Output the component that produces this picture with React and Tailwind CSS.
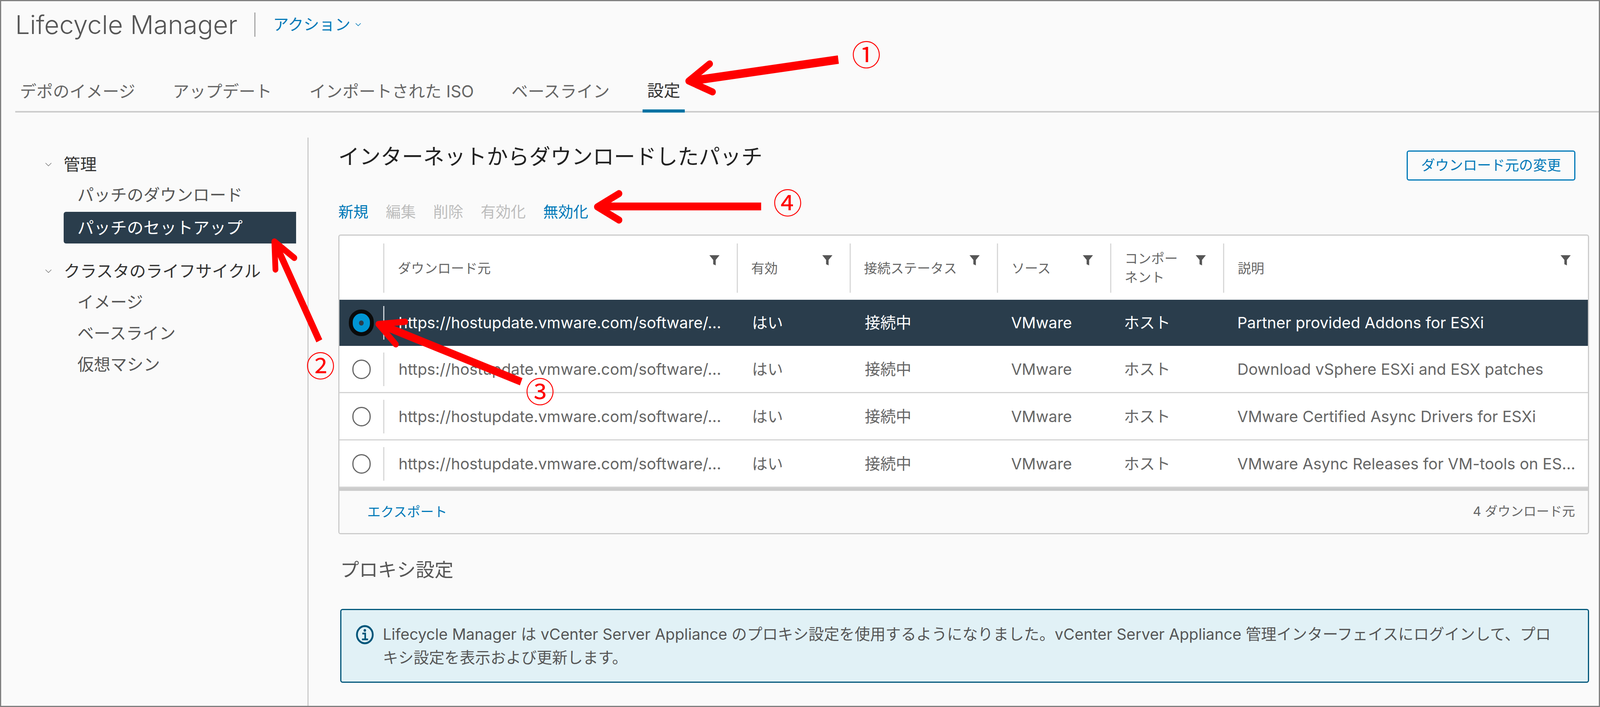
import { ChevronDown } from "lucide-react";

const TABS = ["デポのイメージ", "アップデート", "インポートされた ISO", "ベースライン", "設定"];
const ACTIONS = [
  ["新規", true],
  ["編集", false],
  ["削除", false],
  ["有効化", false],
  ["無効化", true],
];
const HEADERS = ["ダウンロード元", "有効", "接続ステータス", "ソース", "コンポーネント", "説明"];
const ROWS = [
  "Partner provided Addons for ESXi",
  "Download vSphere ESXi and ESX patches",
  "VMware Certified Async Drivers for ESXi",
  "VMware Async Releases for VM-tools on ES…",
];
const COLS = "grid grid-cols-[121fr_975fr_311fr_407fr_312fr_312fr_1006fr]";

function FilterIcon() {
  return (
    <svg width="26" height="28" viewBox="0 0 28 28" preserveAspectRatio="none" className="mt-[29px] shrink-0 text-[#565656]">
      <path d="M0 1h28L17.5 13v14l-7-3V13z" fill="currentColor" />
    </svg>
  );
}

function Radio({ selected }) {
  if (selected) {
    return (
      <div className="w-[64px] h-[68px] rounded-full bg-[#0095d3] border-[10px] border-[#0a0a0a] flex items-center justify-center">
        <div className="w-[12px] h-[13px] rounded-full bg-[#2a3d4c]" />
      </div>
    );
  }
  return <div className="w-[47px] h-[50px] rounded-full border-[3px] border-[#666666] bg-white" />;
}

function TableRow({ desc, selected }) {
  const cell = "h-[86px] flex items-center whitespace-nowrap";
  return (
    <div
      className={`${COLS} text-[39.8px] ${
        selected
          ? "h-[118px] py-[16px] bg-[#2a3d4c] text-white"
          : "h-[121px] py-[17px] text-[#666666] border-b-[3px] border-[#d4d4d4]"
      }`}
    >
      <div className="flex items-center justify-center h-[86px]">
        <Radio selected={selected} />
      </div>
      <div className={`${cell} pl-[36px] border-l-[3px] ${selected ? "border-[#c9d0d6]" : "border-[#d8d8d8]"}`}>
        https://hostupdate.vmware.com/software/…
      </div>
      <div className={`${cell} pl-[39px]`}>はい</div>
      <div className={`${cell} pl-[39px]`}>接続中</div>
      <div className={`${cell} pl-[36px]`}>VMware</div>
      <div className={`${cell} pl-[35px]`}>ホスト</div>
      <div className={`${cell} pl-[36px]`}>{desc}</div>
    </div>
  );
}

function Arrows() {
  return (
    <svg viewBox="0 0 4408 1809" preserveAspectRatio="none" className="absolute -left-[3px] -top-[3px] w-full h-full pointer-events-none">
      <g fill="none" stroke="#ff0000" strokeLinejoin="round" strokeLinecap="round">
        <path d="M2313 153L1905 208" strokeWidth="22" strokeLinecap="butt" />
        <path d="M1958 164L1900 208L1966 236" strokeWidth="18" />
        <path d="M2100 530H1660" strokeWidth="20" strokeLinecap="butt" />
        <path d="M1708 497L1648 531L1708 565" strokeWidth="18" />
        <path d="M881 875L762 630" strokeWidth="18" strokeLinecap="butt" />
        <path d="M760 692L757 620L812 662" strokeWidth="16" />
        <path d="M1438 980L1055 835" strokeWidth="20" strokeLinecap="butt" />
        <path d="M1118 826L1044 832L1092 884" strokeWidth="16" />
      </g>
    </svg>
  );
}

function Marker({ className, children }) {
  return (
    <span className={`absolute -translate-x-1/2 -translate-y-1/2 text-[74px] leading-none text-[#ff0000] font-['Noto_Sans_CJK_JP'] ${className}`}>
      {children}
    </span>
  );
}

export default function App() {
  return (
    <div className="relative w-full h-screen flex flex-col overflow-hidden bg-[#fafafa] border-[3px] border-[#808080] font-['Inter','Noto_Sans_CJK_JP',sans-serif] text-[#565656]">
      {/* header */}
      <div className="h-[120px] shrink-0 flex items-center pl-[36px]">
        <span className="text-[66.5px] font-light text-[#565656] leading-none">Lifecycle Manager</span>
        <div className="ml-[43px] w-[3px] h-[62px] bg-[#a8a8a8]" />
        <span className="ml-[45px] text-[40px] text-[#0079b8]">アクション</span>
        <ChevronDown className="ml-[8px] w-[24px] h-[26px] text-[#0079b8]" strokeWidth={1.5} />
      </div>

      {/* tabs */}
      <div className="mt-[77px] ml-[36px] shrink-0 flex gap-[72px] h-[88px] border-b-[4px] border-[#cccccc]">
        {TABS.map((t) => (
          <div
            key={t}
            className={`px-[12px] pb-[16px] flex items-center text-[42.3px] ${
              t === "設定" ? "text-[#333333] border-b-[8px] border-[#0072a3] h-[88px]" : "text-[#666666]"
            }`}
          >
            {t}
          </div>
        ))}
      </div>

      <div className="flex mt-[64px] flex-1 min-h-0">
        {/* sidebar */}
        <aside className="w-[787px] shrink-0 border-r-[3px] border-[#cccccc] pt-[30px] text-[42.3px] text-[#565656]">
          <div className="h-[78px] flex items-center pl-[107px]">
            <ChevronDown className="w-[28px] h-[30px] text-[#777777]" strokeWidth={1.2} />
            <span className="ml-[25px] text-[#333333]">管理</span>
          </div>
          <div className="h-[78px] flex items-center pl-[195px]">パッチのダウンロード</div>
          <div className="ml-[160px] mt-[4px] w-[595px] h-[81px] rounded-l-[6px] bg-[#2a3d4c] text-white flex items-center pl-[35px]">
            パッチのセットアップ
          </div>
          <div className="mt-[32px] h-[78px] flex items-center pl-[107px]">
            <ChevronDown className="w-[28px] h-[30px] text-[#777777]" strokeWidth={1.2} />
            <span className="ml-[25px] text-[#333333]">クラスタのライフサイクル</span>
          </div>
          <div className="h-[80px] flex items-center pl-[195px]">イメージ</div>
          <div className="h-[80px] flex items-center pl-[195px]">ベースライン</div>
          <div className="h-[80px] flex items-center pl-[195px]">仮想マシン</div>
        </aside>

        {/* main */}
        <main className="flex-1 min-w-0 pl-[76px] pr-[25px]">
          <div className="flex justify-between items-start h-[96px]">
            <h1 className="text-[54.3px] leading-[96px] text-[#222222] font-normal">インターネットからダウンロードしたパッチ</h1>
            <button className="mt-[33px] mr-[35px] h-[77px] w-[432px] rounded-[6px] border-[3px] border-[#0079b8] text-[35.8px] text-[#0079b8] flex items-center justify-center">
              ダウンロード元の変更
            </button>
          </div>

          <div className="mt-[64px] h-[62px] flex items-center gap-[44.5px] text-[38.5px]">
            {ACTIONS.map(([label, on]) => (
              <span key={label} className={on ? "text-[#0079b8]" : "text-[#bdbdbd]"}>
                {label}
              </span>
            ))}
          </div>

          <div className="mt-[26px] h-[767px] rounded-[6px] border-[3px] border-[#cccccc] bg-white overflow-hidden">
            <div className={`${COLS} h-[164px] py-[20px] text-[34px] text-[#666666]`}>
              <div />
              {HEADERS.map((h) => (
                <div key={h} className="h-[126px] border-l-[3px] border-[#d8d8d8] pl-[34px] pr-[44px] flex justify-between items-start">
                  <span className={`self-center ${h === "コンポーネント" ? "w-[140px] leading-[48px]" : ""}`}>{h}</span>
                  <FilterIcon />
                </div>
              ))}
            </div>
            {ROWS.map((d, i) => (
              <TableRow key={d} desc={d} selected={i === 0} />
            ))}
            <div className="h-[8px] bg-[#cccccc]" />
            <div className="h-[109px] bg-[#fafafa] flex items-start justify-between pt-[28px] pl-[71px] pr-[33px]">
              <span className="text-[34.3px] text-[#0079b8]">エクスポート</span>
              <span className="text-[33px] text-[#666666]">4 ダウンロード元</span>
            </div>
          </div>

          <h2 className="mt-[51px] ml-[5px] h-[80px] flex items-center text-[48.3px] font-normal text-[#565656]">プロキシ設定</h2>

          <div className="mt-[60px] ml-[5px] h-[189px] rounded-[6px] border-[3px] border-[#00567a] bg-[#e1f1f6] flex pl-[37px] pt-[32px]">
            <svg width="46" height="50" viewBox="0 0 50 50" preserveAspectRatio="none" className="mt-[6px] shrink-0 text-[#00567a]">
              <circle cx="25" cy="25" r="22" fill="none" stroke="currentColor" strokeWidth="5" />
              <circle cx="25" cy="14" r="3.5" fill="currentColor" />
              <path d="M18 22h8v14M17 37h17" fill="none" stroke="currentColor" strokeWidth="4.5" />
            </svg>
            <p className="ml-[23px] text-[39.4px] leading-[60px] text-[#565656] whitespace-nowrap">
              Lifecycle Manager は vCenter Server Appliance のプロキシ設定を使用するようになりました。vCenter Server Appliance 管理インターフェイスにログインして、プロ
              <br />
              キシ設定を表示および更新します。
            </p>
          </div>
        </main>
      </div>

      <Arrows />
      <Marker className="left-[54.15%] top-[7.4%]">①</Marker>
      <Marker className="left-[19.99%] top-[51.5%]">②</Marker>
      <Marker className="left-[33.73%] top-[55.2%]">③</Marker>
      <Marker className="left-[49.23%] top-[28.4%]">④</Marker>
    </div>
  );
}
